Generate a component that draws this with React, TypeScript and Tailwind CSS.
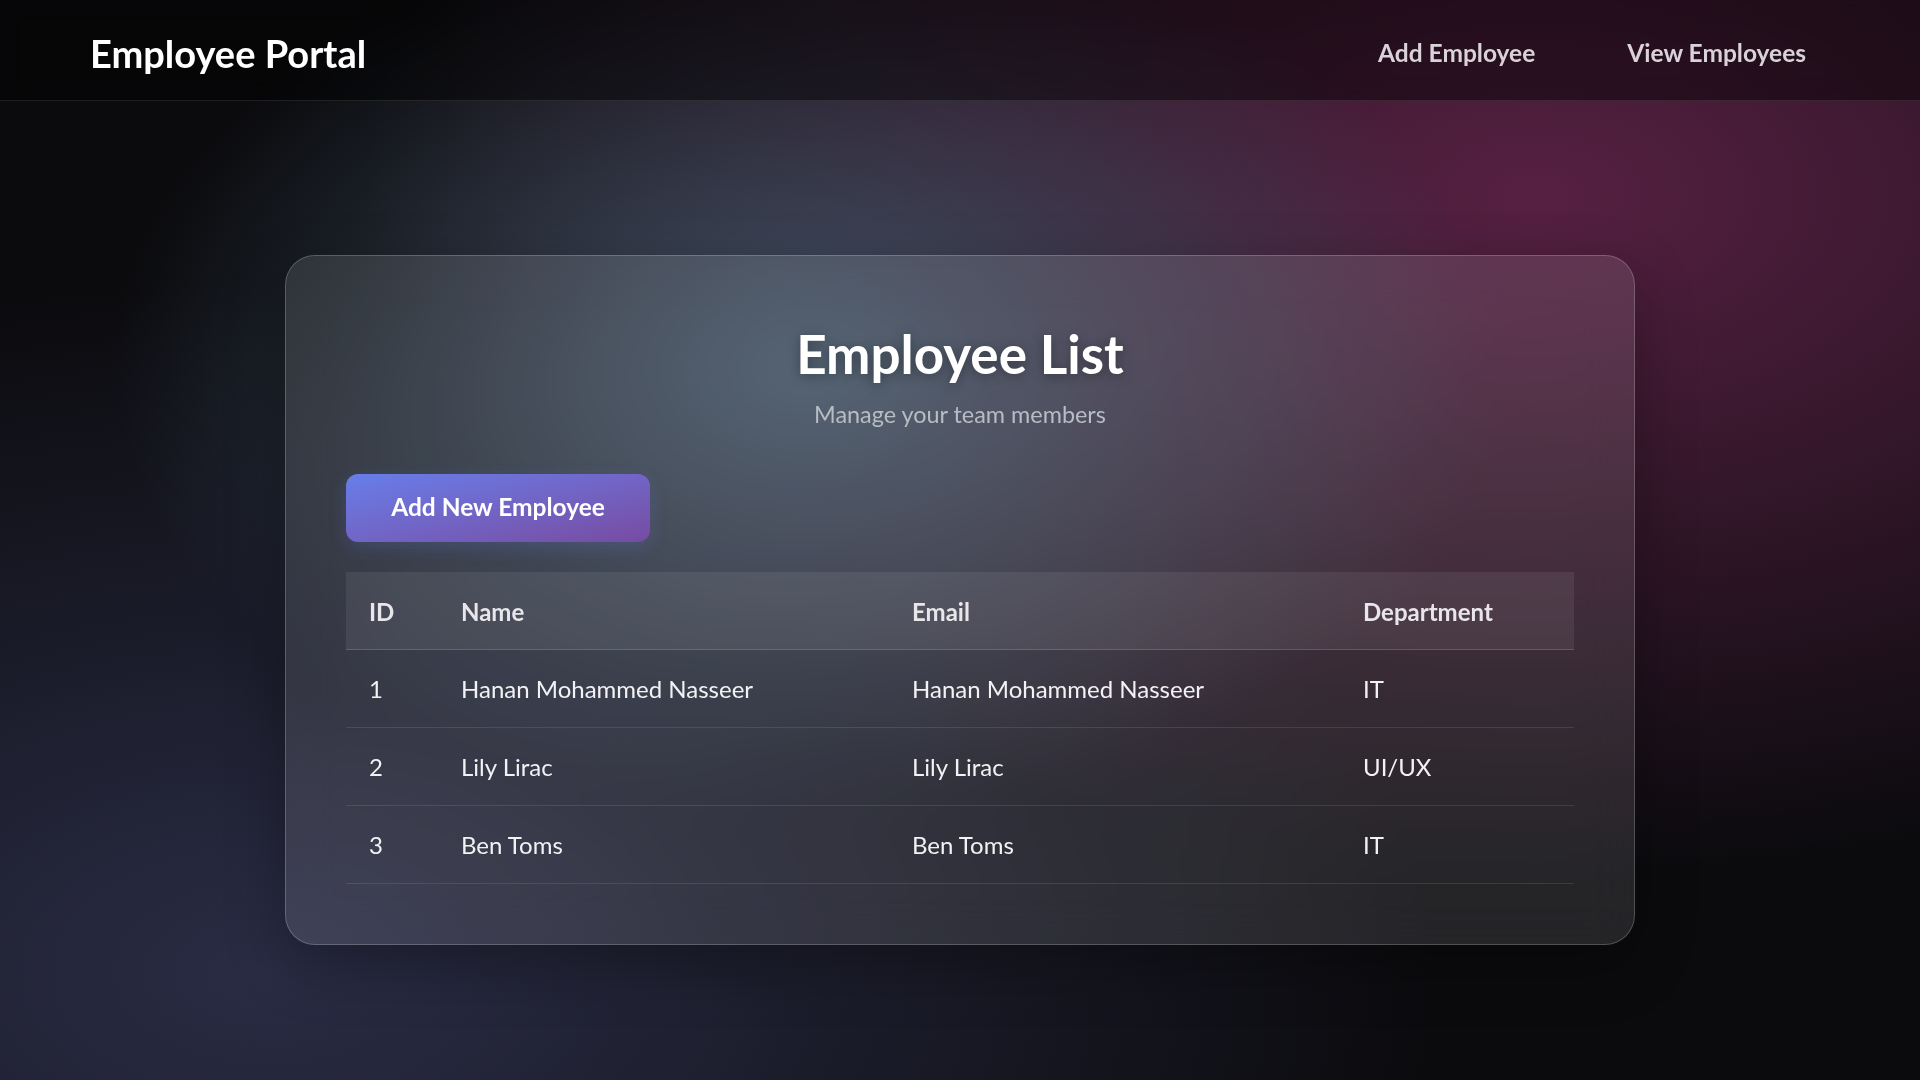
import React from "react";

const employees = [
  { id: 1, name: "Hanan Mohammed Nasseer", email: "Hanan Mohammed Nasseer", department: "IT" },
  { id: 2, name: "Lily Lirac", email: "Lily Lirac", department: "UI/UX" },
  { id: 3, name: "Ben Toms", email: "Ben Toms", department: "IT" },
];

function Navbar() {
  return (
    <nav className="h-[101px] pt-[6px] flex items-center justify-between px-[90px] bg-black/45 border-b border-white/10 backdrop-blur-md">
      <h1 className="text-[38px] font-bold text-white">Employee Portal</h1>
      <div className="flex items-center gap-[44px]">
        <a href="#" className="px-6 text-[24.5px] font-bold text-[#d9d3d9]">
          Add Employee
        </a>
        <a href="#" className="px-6 text-[24.5px] font-bold text-[#d9d3d9]">
          View Employees
        </a>
      </div>
    </nav>
  );
}

function EmployeeTable() {
  return (
    <table className="w-full border-collapse text-left">
      <thead>
        <tr className="bg-white/[0.07] border-b border-white/15">
          <th className="w-[92px] h-[78px] pl-[23px] pt-[3px] text-[24px] font-bold text-[#e8e6ea]">ID</th>
          <th className="w-[451px] h-[78px] pl-[23px] pt-[3px] text-[24px] font-bold text-[#e8e6ea]">Name</th>
          <th className="w-[451px] h-[78px] pl-[23px] pt-[3px] text-[24px] font-bold text-[#e8e6ea]">Email</th>
          <th className="h-[78px] pl-[23px] pt-[3px] text-[24px] font-bold text-[#e8e6ea]">Department</th>
        </tr>
      </thead>
      <tbody>
        {employees.map((emp) => (
          <tr key={emp.id} className="border-b border-white/10">
            <td className="h-[78px] pl-[23px] text-[24px] text-[#f2f2f4]">{emp.id}</td>
            <td className="h-[78px] pl-[23px] text-[24px] text-[#f2f2f4]">{emp.name}</td>
            <td className="h-[78px] pl-[23px] text-[24px] text-[#f2f2f4]">{emp.email}</td>
            <td className="h-[78px] pl-[23px] text-[24px] text-[#f2f2f4]">{emp.department}</td>
          </tr>
        ))}
      </tbody>
    </table>
  );
}

export default function App() {
  return (
    <div className="min-h-screen font-['Lato',sans-serif] text-white bg-[#0b0b0e] bg-[radial-gradient(ellipse_at_42%_34%,rgba(66,86,104,0.95),transparent_44%),radial-gradient(ellipse_at_80%_18%,rgba(100,36,76,0.85),transparent_54%),radial-gradient(ellipse_at_14%_90%,rgba(44,46,72,0.95),transparent_50%)]">
      <Navbar />

      <main className="pt-[154px] pb-[130px]">
        {/* Card */}
        <div className="mx-auto w-[1350px] rounded-[30px] border border-white/20 bg-white/[0.11] backdrop-blur-xl shadow-[0_20px_60px_rgba(0,0,0,0.3)] px-[60px] pt-[66px] pb-[60px]">
          <h2 className="text-center text-[53px] leading-[1.2] font-bold text-white mb-[14px] [text-shadow:0_2px_12px_rgba(0,0,0,0.35)]">
            Employee List
          </h2>
          <p className="text-center text-[23.4px] leading-[1.2] text-[#b8bcc4] mb-[46px]">Manage your team members</p>

          <button className="h-[68px] w-[304px] rounded-[12px] bg-gradient-to-br from-[#667eea] to-[#764ba2] text-[24.5px] font-bold text-white mb-[30px] shadow-[0_6px_18px_rgba(102,126,234,0.2)]">
            Add New Employee
          </button>

          <EmployeeTable />
        </div>
      </main>
    </div>
  );
}
